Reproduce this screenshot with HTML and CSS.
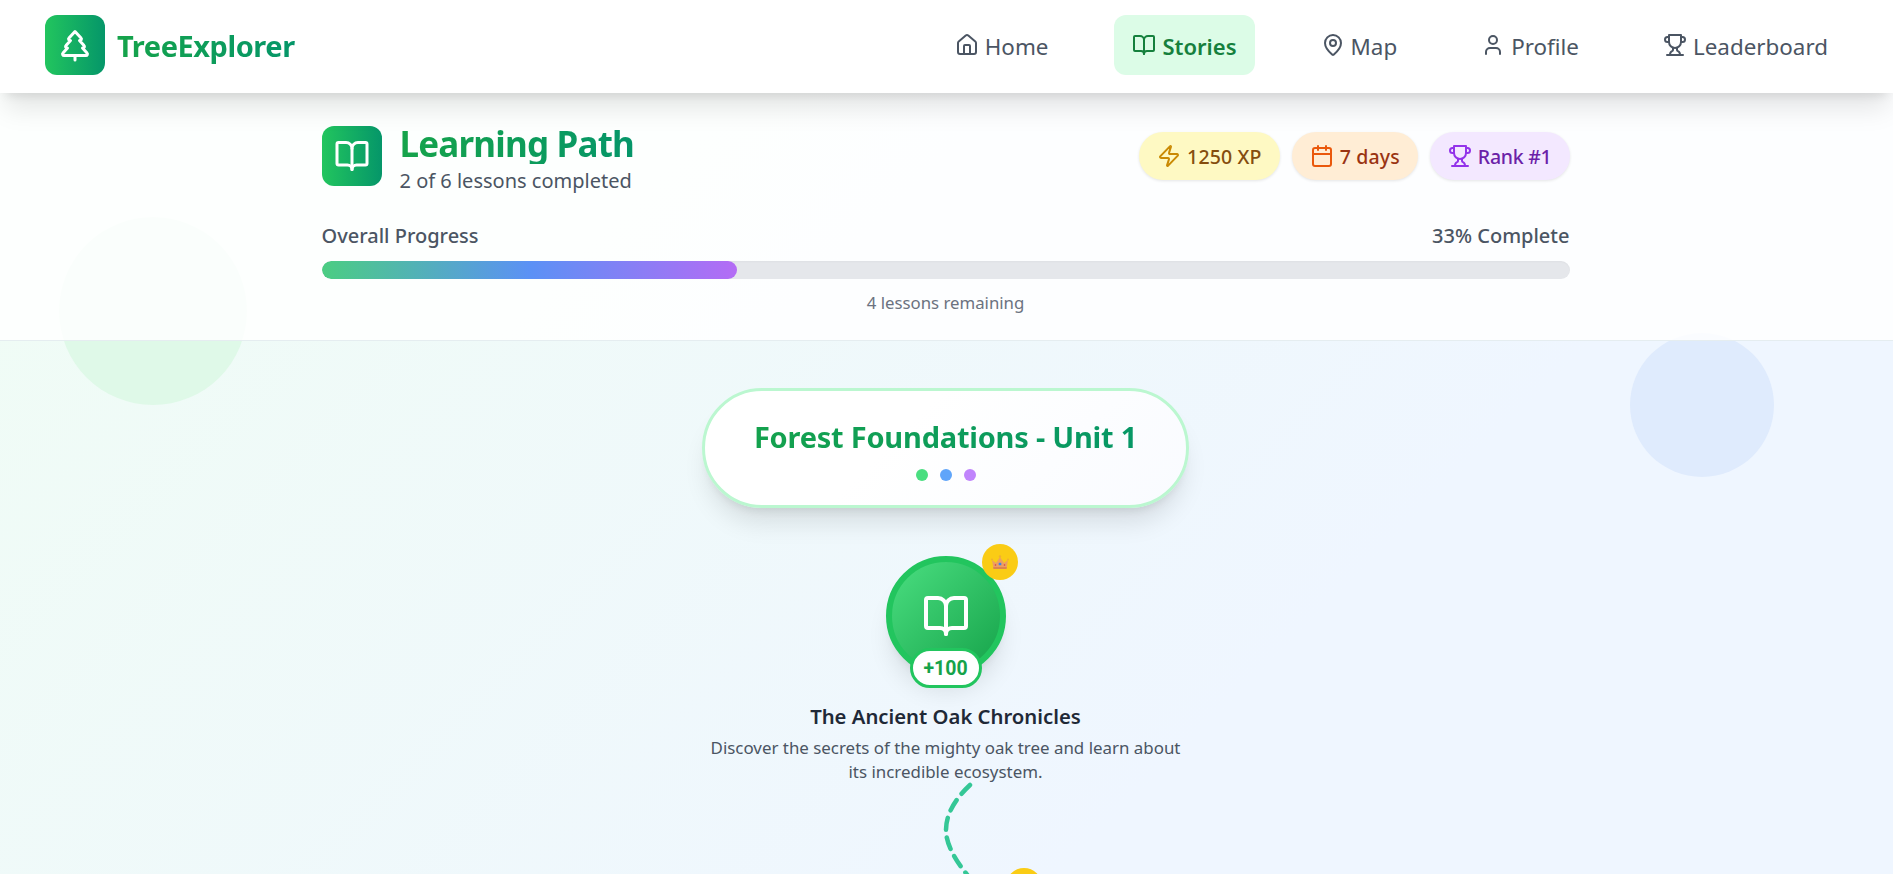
FILE: index.html
```html
<!DOCTYPE html>
<html lang="en">
  <head>
    <meta charset="UTF-8" />
    <meta name="viewport" content="width=device-width, initial-scale=1.0" />
    <title>TreeExplorer</title>
    <link rel="stylesheet" href="styles.css">
  </head>
  <body>
    <svg class="sprite" xmlns="http://www.w3.org/2000/svg">
      <symbol id="i-tree" viewBox="0 0 24 24"><path d="m17 14 3 3.3a1 1 0 0 1-.7 1.7H4.7a1 1 0 0 1-.7-1.7L7 14h-.3a1 1 0 0 1-.7-1.7L9 9h-.2A1 1 0 0 1 8 7.3L12 3l4 4.3a1 1 0 0 1-.8 1.7H15l3 3.3a1 1 0 0 1-.7 1.7H17Z"/><path d="M12 22v-3"/></symbol>
      <symbol id="i-home" viewBox="0 0 24 24"><path d="M15 21v-8a1 1 0 0 0-1-1h-4a1 1 0 0 0-1 1v8"/><path d="M3 10a2 2 0 0 1 .709-1.528l7-5.999a2 2 0 0 1 2.582 0l7 5.999A2 2 0 0 1 21 10v9a2 2 0 0 1-2 2H5a2 2 0 0 1-2-2z"/></symbol>
      <symbol id="i-book" viewBox="0 0 24 24"><path d="M12 7v14"/><path d="M3 18a1 1 0 0 1-1-1V4a1 1 0 0 1 1-1h5a4 4 0 0 1 4 4 4 4 0 0 1 4-4h5a1 1 0 0 1 1 1v13a1 1 0 0 1-1 1h-6a3 3 0 0 0-3 3 3 3 0 0 0-3-3z"/></symbol>
      <symbol id="i-pin" viewBox="0 0 24 24"><path d="M20 10c0 4.993-5.539 10.193-7.399 11.799a1 1 0 0 1-1.202 0C9.539 20.193 4 14.993 4 10a8 8 0 0 1 16 0"/><circle cx="12" cy="10" r="3"/></symbol>
      <symbol id="i-user" viewBox="0 0 24 24"><path d="M19 21v-2a4 4 0 0 0-4-4H9a4 4 0 0 0-4 4v2"/><circle cx="12" cy="7" r="4"/></symbol>
      <symbol id="i-trophy" viewBox="0 0 24 24"><path d="M6 9H4.5a2.5 2.5 0 0 1 0-5H6"/><path d="M18 9h1.5a2.5 2.5 0 0 0 0-5H18"/><path d="M4 22h16"/><path d="M10 14.66V17c0 .55-.47.98-.97 1.21C7.85 18.75 7 20.24 7 22"/><path d="M14 14.66V17c0 .55.47.98.97 1.21C16.15 18.75 17 20.24 17 22"/><path d="M18 2H6v7a6 6 0 0 0 12 0V2Z"/></symbol>
      <symbol id="i-zap" viewBox="0 0 24 24"><path d="M4 14a1 1 0 0 1-.78-1.63l9.9-10.2a.5.5 0 0 1 .86.46l-1.92 6.02A1 1 0 0 0 13 10h7a1 1 0 0 1 .78 1.63l-9.9 10.2a.5.5 0 0 1-.86-.46l1.92-6.02A1 1 0 0 0 11 14z"/></symbol>
      <symbol id="i-calendar" viewBox="0 0 24 24"><path d="M8 2v4"/><path d="M16 2v4"/><rect x="3" y="4" width="18" height="18" rx="2"/><path d="M3 10h18"/></symbol>
      <symbol id="i-crown" viewBox="0 0 18 15">
        <path fill="#ec9f62" d="M1 5l4 3 4-6 4 6 4-3-1.500 9h-13z"/>
        <path fill="#dd8450" d="M2.200 12h13.600l-.3 2h-13z"/>
        <circle fill="#f0b030" cx="1" cy="4.500" r="1"/>
        <circle fill="#f0b030" cx="9" cy="1.500" r="1.200"/>
        <circle fill="#f0b030" cx="17" cy="4.500" r="1"/>
        <rect fill="#3d84e6" x="7.700" y="7.700" width="2.600" height="2.600" rx=".4"/>
        <circle fill="#d63a48" cx="4.500" cy="10" r=".8"/>
        <circle fill="#d63a48" cx="13.500" cy="10" r=".8"/>
      </symbol>
    </svg>

    <div class="page">
      <div class="blob blob-green"></div>
      <div class="blob blob-blue"></div>

      <nav class="navbar">
        <a class="brand">
          <span class="brand-icon"><svg class="icon icon-36"><use href="#i-tree"/></svg></span>
          <span class="brand-name">TreeExplorer</span>
        </a>
        <div class="nav-links">
          <a class="nav-link"><svg class="icon icon-24"><use href="#i-home"/></svg><span>Home</span></a>
          <a class="nav-link active"><svg class="icon icon-24"><use href="#i-book"/></svg><span>Stories</span></a>
          <a class="nav-link"><svg class="icon icon-24"><use href="#i-pin"/></svg><span>Map</span></a>
          <a class="nav-link"><svg class="icon icon-24"><use href="#i-user"/></svg><span>Profile</span></a>
          <a class="nav-link"><svg class="icon icon-24"><use href="#i-trophy"/></svg><span>Leaderboard</span></a>
        </div>
      </nav>

      <header class="path-header">
        <div class="header-inner">
          <div class="header-top">
            <div class="header-title">
              <span class="title-icon"><svg class="icon icon-36"><use href="#i-book"/></svg></span>
              <div>
                <h1>Learning Path</h1>
                <p>2 of 6 lessons completed</p>
              </div>
            </div>
            <div class="stats">
              <span class="stat stat-xp"><svg class="icon icon-24"><use href="#i-zap"/></svg>1250 XP</span>
              <span class="stat stat-days"><svg class="icon icon-24"><use href="#i-calendar"/></svg>7 days</span>
              <span class="stat stat-rank"><svg class="icon icon-24"><use href="#i-trophy"/></svg>Rank #1</span>
            </div>
          </div>
          <div class="progress-labels">
            <span>Overall Progress</span>
            <span>33% Complete</span>
          </div>
          <div class="progress-track"><div class="progress-fill" style="width: 33.33%"></div></div>
          <p class="remaining">4 lessons remaining</p>
        </div>
      </header>

      <main class="path">
        <div class="unit">
          <h2>Forest Foundations - Unit 1</h2>
          <div class="unit-dots">
            <span class="dot dot-green"></span>
            <span class="dot dot-blue"></span>
            <span class="dot dot-purple"></span>
          </div>
        </div>

        <div class="lesson">
          <div class="lesson-node">
            <div class="lesson-circle"><svg class="icon icon-48"><use href="#i-book"/></svg></div>
            <span class="crown"><svg class="crown-icon"><use href="#i-crown"/></svg></span>
            <span class="points">+100</span>
          </div>
          <h3>The Ancient Oak Chronicles</h3>
          <p>Discover the secrets of the mighty oak tree and learn about its incredible ecosystem.</p>
          <svg class="connector" viewBox="0 0 60 100" width="60" height="100">
            <path d="M39 0C23 15 15 30 15 45C15 60 25 78 45 100"/>
          </svg>
        </div>

        <div class="lesson lesson-right">
          <div class="lesson-node">
            <div class="lesson-circle"><svg class="icon icon-48"><use href="#i-book"/></svg></div>
            <span class="crown"><svg class="crown-icon"><use href="#i-crown"/></svg></span>
          </div>
        </div>
      </main>
    </div>
  </body>
</html>
```

FILE: styles.css
```css
* { box-sizing: border-box }
html, body { margin: 0; height: 100%; }
body {
  font-family: "Noto Sans", "Open Sans", sans-serif;
  color: #1f2937;
}
h1, h2, h3, p { margin: 0 }
.sprite { display: none }
.page {
  position: relative;
  height: 874px;
  overflow: hidden;
  background: linear-gradient(135deg, #f0fdf4, #eff6ff 70%);
}
.icon {
  fill: none;
  stroke: currentColor;
  stroke-width: 2;
  stroke-linecap: round;
  stroke-linejoin: round;
  flex: none;
}
.icon-24 { width: 24px; height: 24px; }
.icon-36 { width: 36px; height: 36px; }
.icon-48 { width: 48px; height: 48px; }

/* background circles */
.blob {
  position: absolute;
  border-radius: 50%;
}
.blob-green {
  left: 59px;
  top: 217px;
  width: 188px;
  height: 188px;
  background: #dff9e8;
}
.blob-blue {
  left: 1630px;
  top: 333px;
  width: 144px;
  height: 144px;
  background: #dfebfd;
}

/* navbar */
.navbar {
  position: relative;
  z-index: 2;
  height: 93px;
  padding: 15px 45px 18px;
  display: flex;
  align-items: center;
  justify-content: space-between;
  background: white;
  box-shadow: 0 20px 25px -5px rgba(0,0,0,.1), 0 8px 10px -6px rgba(0,0,0,.1);
}
.brand {
  display: flex;
  align-items: center;
  gap: 12px;
}
.brand-icon, .title-icon {
  width: 60px;
  height: 60px;
  border-radius: 12px;
  display: flex;
  align-items: center;
  justify-content: center;
  color: white;
  background: linear-gradient(90deg, #22c55e, #059669);
}
.brand-name {
  font-size: 29px;
  letter-spacing: -.45px;
  font-weight: 700;
  color: #059669;
  background: linear-gradient(90deg, #16a34a, #059669);
  -webkit-background-clip: text;
  background-clip: text;
  -webkit-text-fill-color: transparent;
}
.nav-links {
  display: flex;
  align-items: center;
  gap: 48px;
}
.nav-link {
  height: 60px;
  padding: 0 18px;
  display: flex;
  align-items: center;
  gap: 6px;
  border-radius: 12px;
  font-size: 22.4px;
  color: #4b5563;
}
.nav-link span { padding-top: 2px; }
.nav-link:last-child { padding-right: 20px; }
.nav-link.active {
  background: #dcfce7;
  color: #15803d;
  font-size: 22px;
  font-weight: 600;
}

/* header */
.path-header {
  position: relative;
  z-index: 1;
  height: 248px;
  padding: 33px 2px 0 0;
  background: rgba(255,255,255,.85);
  border-bottom: 1px solid #e5edf0;
}
.header-inner {
  width: 1248px;
  margin: 0 auto;
}
.header-top {
  display: flex;
  justify-content: space-between;
  align-items: flex-start;
}
.header-title {
  display: flex;
  gap: 18px;
}
.header-title h1 {
  font-size: 35px;
  letter-spacing: -.8px;
  line-height: 36px;
  padding-bottom: 2px;
  font-weight: 700;
  color: #16a34a;
  background: linear-gradient(90deg, #16a34a, #059669);
  -webkit-background-clip: text;
  background-clip: text;
  -webkit-text-fill-color: transparent;
}
.header-title p {
  margin-top: 3px;
  font-size: 20px;
  line-height: 28px;
  color: #4b5563;
}
.stats {
  display: flex;
  gap: 12px;
  padding-top: 6px;
}
.stat {
  height: 48px;
  padding: 0 18px;
  display: flex;
  align-items: center;
  gap: 6px;
  border-radius: 24px;
  font-size: 19.5px;
  font-weight: 500;
  box-shadow: 0 1px 3px rgba(0,0,0,.1);
}
.stat-xp { background: #fef9c3; color: #854d0e; letter-spacing: .15px; }
.stat-xp .icon { color: #ca8a04; }
.stat-days { background: #ffedd5; color: #9a3412; letter-spacing: .15px; }
.stat-days .icon { color: #ea580c; }
.stat-rank { background: #f3e8ff; color: #6b21a8; letter-spacing: -.25px; }
.stat-rank .icon { color: #9333ea; }
.progress-labels {
  display: flex;
  justify-content: space-between;
  margin-top: 27px;
  font-size: 20px;
  line-height: 28px;
  font-weight: 500;
  color: #4b5563;
}
.progress-track {
  height: 18px;
  margin-top: 11px;
  border-radius: 9px;
  background: #e5e7eb;
  box-shadow: inset 0 1px 2px rgba(0,0,0,.03);
  overflow: hidden;
}
.progress-fill {
  height: 100%;
  border-radius: 9px;
  background: linear-gradient(90deg, #4bcd82, #5b91f5, #b46cf5);
}
.remaining {
  margin-top: 12px;
  text-align: center;
  font-size: 16.8px;
  line-height: 24px;
  color: #6b7280;
}

/* learning path */
.path {
  position: relative;
  display: flex;
  flex-direction: column;
  align-items: center;
  padding: 47px 2px 0 0;
}
.unit {
  width: 487px;
  height: 120px;
  padding-top: 28px;
  border: 3px solid #bbf7d0;
  border-radius: 60px;
  text-align: center;
  background: linear-gradient(135deg, #fff 40%, #f9fbff);
  box-shadow: 0 20px 25px -5px rgba(0,0,0,.1), 0 8px 10px -6px rgba(0,0,0,.1);
}
.unit h2 {
  font-size: 29px;
  letter-spacing: -.22px;
  line-height: 36px;
  font-weight: 700;
  color: #16a34a;
  background: linear-gradient(90deg, #16a34a, #059669);
  -webkit-background-clip: text;
  background-clip: text;
  -webkit-text-fill-color: transparent;
}
.unit-dots {
  display: flex;
  justify-content: center;
  gap: 12px;
  margin-top: 14px;
}
.dot {
  width: 12px;
  height: 12px;
  border-radius: 50%;
}
.dot-green { background: #4ade80; }
.dot-blue { background: #60a5fa; }
.dot-purple { background: #c084fc; }

.lesson {
  position: relative;
  width: 480px;
  margin-top: 48px;
  display: flex;
  flex-direction: column;
  align-items: center;
  text-align: center;
}
.lesson-node {
  position: relative;
  width: 120px;
  height: 120px;
}
.lesson-circle {
  width: 120px;
  height: 120px;
  border: 6px solid #22c55e;
  border-radius: 50%;
  display: flex;
  align-items: center;
  justify-content: center;
  color: white;
  background: linear-gradient(135deg, #4ade80, #16a34a);
  box-shadow: 0 20px 25px -5px rgba(0,0,0,.1), 0 8px 10px -6px rgba(0,0,0,.1);
}
.crown {
  position: absolute;
  top: -12px;
  right: -12px;
  width: 36px;
  height: 36px;
  border-radius: 50%;
  display: flex;
  align-items: center;
  justify-content: center;
  background: #facc15;
}
.crown-icon { width: 18px; height: 15px; }
.points {
  position: absolute;
  left: 24px;
  bottom: -12px;
  width: 72px;
  height: 40px;
  border: 3px solid #22c55e;
  border-radius: 20px;
  display: flex;
  align-items: center;
  justify-content: center;
  font-family: Roboto, sans-serif;
  font-size: 19.5px;
  font-weight: 700;
  color: #16a34a;
  background: white;
}
.lesson h3 {
  margin-top: 26px;
  font-size: 20.3px;
  line-height: 28px;
  font-weight: 600;
  color: #1f2937;
}
.lesson p {
  margin-top: 6px;
  font-size: 16.9px;
  line-height: 24px;
  color: #4b5563;
}
.connector {
  position: absolute;
  left: 225px;
  top: 229px;
  overflow: visible;
  fill: none;
  stroke: #34c796;
  stroke-width: 4.5;
  stroke-linecap: round;
  stroke-dasharray: 12 8;
}
.lesson-right {
  margin-top: 96px;
  margin-left: 48px;
}
```
